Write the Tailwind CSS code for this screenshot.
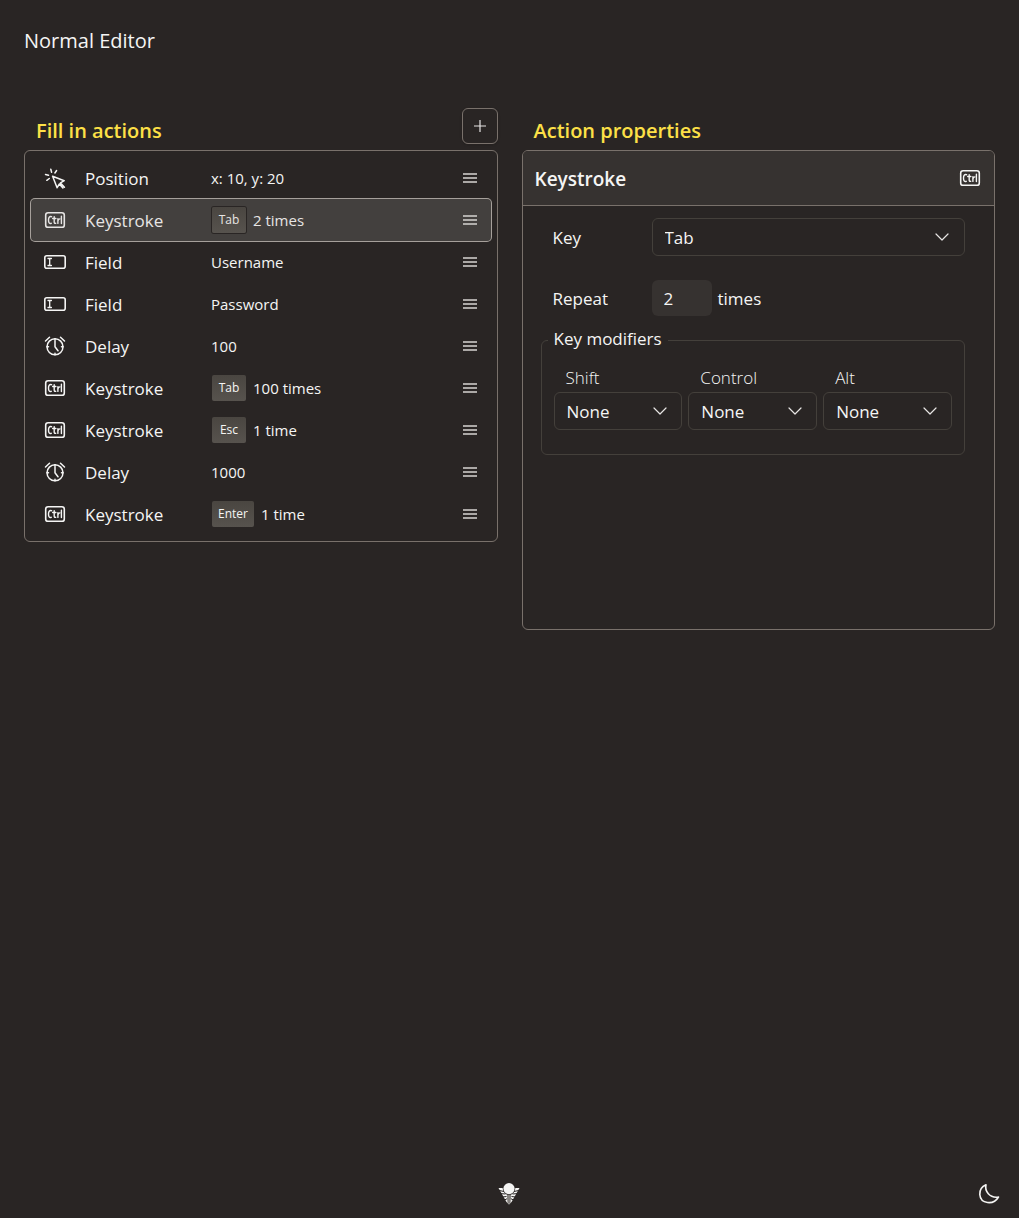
<!DOCTYPE html>
<html lang="en">
<head>
<meta charset="utf-8">
<meta name="viewport" content="width=device-width, initial-scale=1">
<title>Normal Editor</title>
<script src="https://cdn.jsdelivr.net/npm/@tailwindcss/browser@4"></script>
</head>
<body class="flex min-h-screen flex-col bg-[#292524] font-['Open_Sans',sans-serif] text-[17px] leading-6 text-stone-100">
<svg class="hidden" aria-hidden="true">
  <symbol id="i-ctrl" viewBox="0 0 22 22" fill="none" stroke="currentColor" stroke-linecap="round" stroke-linejoin="round">
    <rect x="1.7" y="3.7" width="18.6" height="14.6" rx="2.4" stroke-width="1.6"/>
    <path d="M7.600 7.700C5.400 7 4.500 8.600 4.500 11s.8 4 2.800 3.300M10.200 7.600v5.400q0 1.600 1.500 1.300M8.700 9.500h3.200M13.900 9.800v4.600M13.900 12q.4-2 1.900-2.100M17.400 7.300v7.300" stroke-width="1.400"/>
  </symbol>
  <symbol id="i-position" viewBox="0 0 22 22" fill="none" stroke="currentColor" stroke-linecap="round" stroke-linejoin="round" stroke-width="1.500">
    <path d="M8.600 9.300l11.600 4.400-3.700 2.200 3.900 4.400M8.600 9.300l4.500 11.400 2.300-3.700 3.500 4"/>
    <path d="M6.800 2.300l.8 2.900M1.500 7.500l3 .8M12.600 3.500l-1.700 2.500M2.800 13.300l2.500-1.800"/>
  </symbol>
  <symbol id="i-field" viewBox="0 0 22 22" fill="none" stroke="currentColor" stroke-linecap="round" stroke-linejoin="round">
    <rect x=".8" y="4.700" width="20.400" height="12.600" rx="2" stroke-width="1.600"/>
    <path d="M4 7.500h3.400M4 14.500h3.400M5.700 7.500v7" stroke-width="1.300"/>
  </symbol>
  <symbol id="i-delay" viewBox="0 0 22 22" fill="none" stroke="currentColor" stroke-linecap="round" stroke-linejoin="round" stroke-width="1.500">
    <circle cx="11" cy="11.800" r="8"/>
    <path d="M11 6v5.800l3 4M1.500 6l4-3.800M20.500 6l-4-3.800M11 3.800v1.500M11 18.200v1.500M3 11.800h1.500M17.500 11.800h1.500"/>
  </symbol>
  <symbol id="i-menu" viewBox="0 0 14 14" fill="none" stroke="currentColor" stroke-width="1.500">
    <path d="M0 3h14M0 7h14M0 11h14"/>
  </symbol>
  <symbol id="i-chevron" viewBox="0 0 14 14" fill="none" stroke="currentColor" stroke-width="1.200" stroke-linecap="round" stroke-linejoin="round">
    <path d="M1 4l6 6 6-6"/>
  </symbol>
</svg>

<header class="px-6 pt-6">
  <h1 class="pt-px text-xl leading-8">Normal Editor</h1>
</header>

<main class="grid flex-1 grid-cols-2 items-start gap-6 px-6 pt-[51px]">
  <section aria-labelledby="actions-title">
    <div class="flex h-[42px] items-start justify-between">
      <h2 id="actions-title" class="pl-3 pt-2 text-xl leading-[30px] font-semibold text-[#fde047]">Fill in actions</h2>
      <button type="button" aria-label="Add action" class="grid size-9 place-items-center rounded-md border border-stone-500 text-stone-200 shadow">
        <svg class="size-4" viewBox="0 0 16 16" fill="none" stroke="currentColor" stroke-width="1.200"><path d="M8 2v12M2 8h12"/></svg>
      </button>
    </div>
    <ul class="rounded-md border border-stone-500 p-1.5">
      <li><button type="button" class="grid h-[42px] w-full grid-cols-[41px_126px_1fr_14px] items-center rounded pl-[13px] pr-3.5 text-left"><svg class="size-[22px]"><use href="#i-position"/></svg><span class="pt-0.5">Position</span><span class="text-[15px]">x: 10, y: 20</span><svg class="size-3.5 text-stone-300"><use href="#i-menu"/></svg></button></li>
      <li><button type="button" aria-pressed="true" class="grid h-[42px] w-full grid-cols-[41px_126px_1fr_14px] items-center rounded bg-[#43403e] pl-[13px] pr-3.5 text-left text-stone-200 ring-1 ring-stone-400"><svg class="size-[22px]"><use href="#i-ctrl"/></svg><span class="pt-0.5">Keystroke</span><span class="flex items-center gap-[7px] text-[15px]"><kbd class="ml-px min-w-[34px] rounded-xs bg-linear-to-b from-[#4a4641] to-[#57534e] px-1.5 text-center font-['Open_Sans',sans-serif] text-xs leading-[26px] ring-1 ring-stone-800">Tab</kbd>2 times</span><svg class="size-3.5 text-stone-300"><use href="#i-menu"/></svg></button></li>
      <li><button type="button" class="grid h-[42px] w-full grid-cols-[41px_126px_1fr_14px] items-center rounded pl-[13px] pr-3.5 text-left"><svg class="size-[22px]"><use href="#i-field"/></svg><span class="pt-0.5">Field</span><span class="text-[15px]">Username</span><svg class="size-3.5 text-stone-300"><use href="#i-menu"/></svg></button></li>
      <li><button type="button" class="grid h-[42px] w-full grid-cols-[41px_126px_1fr_14px] items-center rounded pl-[13px] pr-3.5 text-left"><svg class="size-[22px]"><use href="#i-field"/></svg><span class="pt-0.5">Field</span><span class="text-[15px]">Password</span><svg class="size-3.5 text-stone-300"><use href="#i-menu"/></svg></button></li>
      <li><button type="button" class="grid h-[42px] w-full grid-cols-[41px_126px_1fr_14px] items-center rounded pl-[13px] pr-3.5 text-left"><svg class="size-[22px]"><use href="#i-delay"/></svg><span class="pt-0.5">Delay</span><span class="text-[15px]">100</span><svg class="size-3.5 text-stone-300"><use href="#i-menu"/></svg></button></li>
      <li><button type="button" class="grid h-[42px] w-full grid-cols-[41px_126px_1fr_14px] items-center rounded pl-[13px] pr-3.5 text-left"><svg class="size-[22px]"><use href="#i-ctrl"/></svg><span class="pt-0.5">Keystroke</span><span class="flex items-center gap-[7px] text-[15px]"><kbd class="ml-px min-w-[34px] rounded-xs bg-linear-to-b from-[#4a4641] to-[#57534e] px-1.5 text-center font-['Open_Sans',sans-serif] text-xs leading-[26px]">Tab</kbd>100 times</span><svg class="size-3.5 text-stone-300"><use href="#i-menu"/></svg></button></li>
      <li><button type="button" class="grid h-[42px] w-full grid-cols-[41px_126px_1fr_14px] items-center rounded pl-[13px] pr-3.5 text-left"><svg class="size-[22px]"><use href="#i-ctrl"/></svg><span class="pt-0.5">Keystroke</span><span class="flex items-center gap-[7px] text-[15px]"><kbd class="ml-px min-w-[34px] rounded-xs bg-linear-to-b from-[#4a4641] to-[#57534e] px-1.5 text-center font-['Open_Sans',sans-serif] text-xs leading-[26px]">Esc</kbd>1 time</span><svg class="size-3.5 text-stone-300"><use href="#i-menu"/></svg></button></li>
      <li><button type="button" class="grid h-[42px] w-full grid-cols-[41px_126px_1fr_14px] items-center rounded pl-[13px] pr-3.5 text-left"><svg class="size-[22px]"><use href="#i-delay"/></svg><span class="pt-0.5">Delay</span><span class="text-[15px]">1000</span><svg class="size-3.5 text-stone-300"><use href="#i-menu"/></svg></button></li>
      <li><button type="button" class="grid h-[42px] w-full grid-cols-[41px_126px_1fr_14px] items-center rounded pl-[13px] pr-3.5 text-left"><svg class="size-[22px]"><use href="#i-ctrl"/></svg><span class="pt-0.5">Keystroke</span><span class="flex items-center gap-[7px] text-[15px]"><kbd class="ml-px min-w-[34px] rounded-xs bg-linear-to-b from-[#4a4641] to-[#57534e] px-1.5 text-center font-['Open_Sans',sans-serif] text-xs leading-[26px]">Enter</kbd>1 time</span><svg class="size-3.5 text-stone-300"><use href="#i-menu"/></svg></button></li>
    </ul>
  </section>

  <section aria-labelledby="props-title">
    <div class="flex h-[42px] items-start">
      <h2 id="props-title" class="pl-3 pt-2 text-xl leading-[30px] font-semibold text-[#fde047]">Action properties</h2>
    </div>
    <div class="min-h-[480px] overflow-hidden rounded-md border border-stone-500">
      <div class="flex h-[55px] items-center justify-between border-b border-stone-500 bg-[#363230] pl-3 pr-[13px]">
        <h3 class="pt-0.5 text-[19px] leading-7 font-semibold">Keystroke</h3>
        <svg class="size-[22px]"><use href="#i-ctrl"/></svg>
      </div>
      <form class="pl-[18px] pr-[29px] pt-3">
        <div class="flex items-center pl-3">
          <label for="key" class="w-[99px] shrink-0 pt-0.5">Key</label>
          <div class="relative flex-1">
            <select id="key" class="h-[38px] w-full appearance-none rounded-md border border-stone-700 bg-transparent pl-3 pr-9 pt-0.5"><option>Tab</option><option>Esc</option><option>Enter</option></select>
            <svg class="pointer-events-none absolute top-3 right-4 size-3.5 text-stone-200"><use href="#i-chevron"/></svg>
          </div>
        </div>
        <div class="mt-6 flex items-center pl-3">
          <label for="repeat" class="w-[99px] shrink-0 pt-0.5">Repeat</label>
          <input id="repeat" type="text" value="2" class="mr-1.5 h-9 w-[60px] rounded-md bg-[#363230] px-3">
          <span class="pt-0.5">times</span>
        </div>
        <fieldset class="mt-2.5 rounded-md border border-stone-700 px-3 pb-6">
          <legend class="-ml-1.5 px-1.5 pb-0.5 leading-[26px]">Key modifiers</legend>
          <div class="grid grid-cols-3 gap-1.5 pt-[11px]">
            <div>
              <label for="shift" class="block pb-px pl-3 leading-[26px] font-light">Shift</label>
              <div class="relative">
                <select id="shift" class="h-[38px] w-full appearance-none rounded-md border border-stone-700 bg-transparent pl-3 pr-9 pt-0.5"><option>None</option><option>Any</option><option>Left</option><option>Right</option></select>
                <svg class="pointer-events-none absolute top-3 right-[15px] size-3.5 text-stone-200"><use href="#i-chevron"/></svg>
              </div>
            </div>
            <div>
              <label for="control" class="block pb-px pl-3 leading-[26px] font-light">Control</label>
              <div class="relative">
                <select id="control" class="h-[38px] w-full appearance-none rounded-md border border-stone-700 bg-transparent pl-3 pr-9 pt-0.5"><option>None</option><option>Any</option><option>Left</option><option>Right</option></select>
                <svg class="pointer-events-none absolute top-3 right-[15px] size-3.5 text-stone-200"><use href="#i-chevron"/></svg>
              </div>
            </div>
            <div>
              <label for="alt" class="block pb-px pl-3 leading-[26px] font-light">Alt</label>
              <div class="relative">
                <select id="alt" class="h-[38px] w-full appearance-none rounded-md border border-stone-700 bg-transparent pl-3 pr-9 pt-0.5"><option>None</option><option>Any</option><option>Left</option><option>Right</option></select>
                <svg class="pointer-events-none absolute top-3 right-[15px] size-3.5 text-stone-200"><use href="#i-chevron"/></svg>
              </div>
            </div>
          </div>
        </fieldset>
      </form>
    </div>
  </section>
</main>

<footer class="grid grid-cols-3 items-center px-[18px] pb-3">
  <a href="#" aria-label="Home" class="col-start-2 justify-self-center">
    <svg class="size-6" viewBox="0 0 24 24" fill="none">
      <path d="M1.500 6H8l4 6 4-6h6.500L14.500 20 12 22.500 9.500 20z" fill="currentColor"/>
      <path d="M1.500 8.300l5.500 1.200M3.500 11.600L8.500 12M5.500 15l4-.5M7.500 18l3-1.500M22.500 8.300l-5.500 1.200M20.500 11.600l-5 .4M18.500 15l-4-.5M16.500 18l-3-1.500" stroke="#292524" stroke-width="1"/>
      <path d="M9.800 12h4.400l-.6 8.500-1.600 2-1.600-2z" fill="#85827f"/>
      <circle cx="12" cy="6.600" r="6.300" fill="#292524"/>
      <circle cx="12" cy="6.600" r="5.600" fill="currentColor"/>
    </svg>
  </a>
  <button type="button" aria-label="Toggle theme" class="justify-self-end">
    <svg class="size-6" viewBox="0 0 24 24" fill="none" stroke="currentColor" stroke-width="1.600" stroke-linejoin="round"><path d="M9 2.800C7.500 9 12.500 16.500 21.500 15 16.500 23.500 3.500 22 2.800 12.500 2.600 8.500 5 4.500 9 2.800z"/></svg>
  </button>
</footer>
</body>
</html>
